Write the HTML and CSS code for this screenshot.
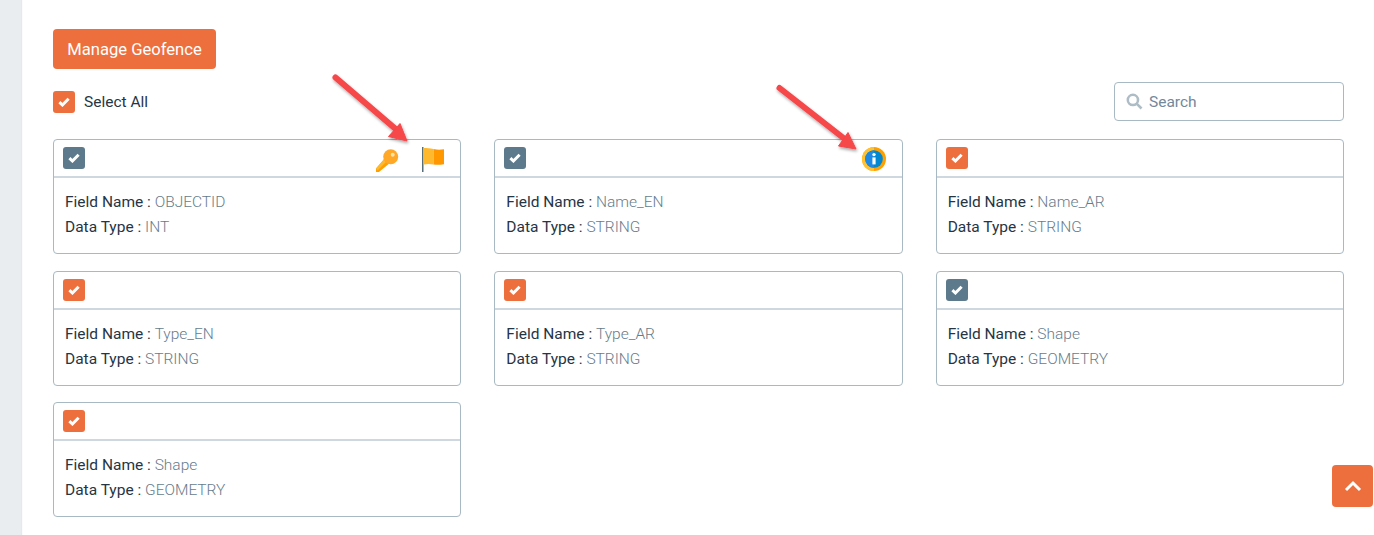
FILE: index.html
```html
<!DOCTYPE html>
<html lang="en">
<head>
<meta charset="utf-8">
<title>Manage Geofence</title>
<link rel="stylesheet" href="styles.css">
</head>
<body>
<div class="layout">
  <aside class="rail"></aside>
  <main class="main">
    <button class="btn-primary" type="button">Manage Geofence</button>
    <div class="toolbar">
      <label class="select-all">
        <span class="check check-orange"><svg viewBox="0 0 12 10" class="tick"><path d="M1.4 5.2 4.4 8 10.6 1.8"/></svg></span>
        <span>Select All</span>
      </label>
      <div class="search">
        <svg class="search-icon" viewBox="0 0 16 16"><circle cx="6.5" cy="6.5" r="4.8"/><path d="M10 10l4.6 4.6"/></svg>
        <span>Search</span>
      </div>
    </div>
    <div class="grid">
      <section class="card">
        <header class="card-head">
          <span class="check check-slate"><svg viewBox="0 0 12 10" class="tick"><path d="M1.4 5.2 4.4 8 10.6 1.8"/></svg></span>
          <span class="head-icons">
            <svg class="ic-key" viewBox="0 0 23 23"><path fill="#ffa000" d="M0 19.500 9.500 8.500l5 5L3 23H0z"/><path fill="#ffb92e" d="M0 19.500 9.500 8.500l2.500 2.500L1.500 21.500z"/><circle cx="14.700" cy="7.700" r="7.500" fill="#ffa726"/><circle cx="16.700" cy="5.700" r="2" fill="#ffe2a8"/></svg>
            <svg class="ic-flag" viewBox="0 0 23 25"><rect x="0" y="0" width="1.500" height="25" fill="#546e7a"/><path fill="#ffb92e" d="M1.500 1c4 0 6 .2 10 1v15.500C7.500 16.800 5.500 16.800 1.500 17.500z"/><path fill="#ff9800" d="M11.500 2c4 .8 6.500 .8 10.500 .2v15c-4 .5-6.500 .8-10.500 .3z"/></svg>
          </span>
        </header>
        <div class="card-body">
          <p>Field Name : <span class="val">OBJECTID</span></p>
          <p>Data Type : <span class="val">INT</span></p>
        </div>
      </section>
      <section class="card">
        <header class="card-head">
          <span class="check check-slate"><svg viewBox="0 0 12 10" class="tick"><path d="M1.4 5.2 4.4 8 10.6 1.8"/></svg></span>
          <span class="head-icons">
            <svg class="ic-info" viewBox="0 0 24 24"><circle cx="12" cy="12" r="12" fill="#ffa000"/><path fill="#ffc233" d="M12 0a12 12 0 0 0 0 24z"/><circle cx="12" cy="12" r="8.800" fill="#0288d1"/><path fill="#1e88e5" d="M12 3.200a8.800 8.800 0 0 0 0 17.600z"/><circle cx="12" cy="7.600" r="1.700" fill="#fff"/><rect x="10.400" y="10.400" width="3.200" height="7" fill="#fff"/></svg>
          </span>
        </header>
        <div class="card-body">
          <p>Field Name : <span class="val">Name_EN</span></p>
          <p>Data Type : <span class="val">STRING</span></p>
        </div>
      </section>
      <section class="card">
        <header class="card-head">
          <span class="check check-orange"><svg viewBox="0 0 12 10" class="tick"><path d="M1.4 5.2 4.4 8 10.6 1.8"/></svg></span>
        </header>
        <div class="card-body">
          <p>Field Name : <span class="val">Name_AR</span></p>
          <p>Data Type : <span class="val">STRING</span></p>
        </div>
      </section>
      <section class="card">
        <header class="card-head">
          <span class="check check-orange"><svg viewBox="0 0 12 10" class="tick"><path d="M1.4 5.2 4.4 8 10.6 1.8"/></svg></span>
        </header>
        <div class="card-body">
          <p>Field Name : <span class="val">Type_EN</span></p>
          <p>Data Type : <span class="val">STRING</span></p>
        </div>
      </section>
      <section class="card">
        <header class="card-head">
          <span class="check check-orange"><svg viewBox="0 0 12 10" class="tick"><path d="M1.4 5.2 4.4 8 10.6 1.8"/></svg></span>
        </header>
        <div class="card-body">
          <p>Field Name : <span class="val">Type_AR</span></p>
          <p>Data Type : <span class="val">STRING</span></p>
        </div>
      </section>
      <section class="card">
        <header class="card-head">
          <span class="check check-slate"><svg viewBox="0 0 12 10" class="tick"><path d="M1.4 5.2 4.4 8 10.6 1.8"/></svg></span>
        </header>
        <div class="card-body">
          <p>Field Name : <span class="val">Shape</span></p>
          <p>Data Type : <span class="val">GEOMETRY</span></p>
        </div>
      </section>
      <section class="card">
        <header class="card-head">
          <span class="check check-orange"><svg viewBox="0 0 12 10" class="tick"><path d="M1.4 5.2 4.4 8 10.6 1.8"/></svg></span>
        </header>
        <div class="card-body">
          <p>Field Name : <span class="val">Shape</span></p>
          <p>Data Type : <span class="val">GEOMETRY</span></p>
        </div>
      </section>
    </div>
  </main>
</div>
<button class="to-top" type="button" aria-label="Back to top"><svg viewBox="0 0 18 12"><path d="M2 10 9 3l7 7"/></svg></button>
<svg class="arrows" viewBox="0 0 1374 535">
  <defs><filter id="sh" x="-20%" y="-20%" width="140%" height="140%"><feDropShadow dx="1" dy="2" stdDeviation="1.500" flood-color="#000" flood-opacity=".35"/></filter></defs>
  <g filter="url(#sh)" fill="#f6464a" stroke="none">
    <path d="M335.500 77.500 398 131" stroke="#f6464a" stroke-width="6" stroke-linecap="round" fill="none"/>
    <path d="M407 141 388.500 136.500 400 123.500z" stroke="#f6464a" stroke-width="1"/>
    <path d="M779.500 88 846 140" stroke="#f6464a" stroke-width="6" stroke-linecap="round" fill="none"/>
    <path d="M856 149 838.500 146 848 132.500z" stroke="#f6464a" stroke-width="1"/>
  </g>
</svg>
</body>
</html>
```
FILE: styles.css
```css
* { box-sizing: border-box; }
html, body { margin: 0; height: 100%; overflow: hidden; }
body { background: #fff; font-family: Roboto, "Liberation Sans", sans-serif; font-size: 15.5px; color: #263544; }
.layout { display: flex; height: 535px; }
.rail { width: 21px; flex: none; background: #e9edf0; box-shadow: 1px 0 1px rgba(90,110,125,.15); }
.main { flex: 1; padding: 29px 30px 0 32px; }
.btn-primary { display: block; width: 163px; height: 40px; border: 0; border-radius: 4px; background: #ed6f3d; color: #fff; font: 400 16.6px Roboto, "Liberation Sans", sans-serif; padding: 0; }
.toolbar { display: flex; justify-content: space-between; align-items: center; margin-top: 13px; height: 39px; }
.select-all { display: flex; align-items: center; gap: 9px; }
.check { display: flex; align-items: center; justify-content: center; width: 22px; height: 22px; border-radius: 3px; flex: none; }
.check-orange { background: #ed6f3d; }
.check-slate { background: #5c7a8c; }
.tick { width: 12px; height: 10px; fill: none; stroke: #fff; stroke-width: 3; }
.search { display: flex; align-items: center; gap: 6px; width: 230px; height: 39px; border: 1px solid #a8b9c3; border-radius: 4px; padding-left: 11px; color: #73889a; }
.search-icon { width: 17px; height: 17px; fill: none; stroke: #aebcc5; stroke-width: 2.400; }
.grid { display: grid; grid-template-columns: repeat(3, 1fr); column-gap: 33px; row-gap: 16.5px; margin-top: 18px; }
.card { height: 115px; border: 1px solid #a8b9c3; border-radius: 4px; background: #fff; }
.card-head { display: flex; align-items: center; justify-content: space-between; height: 38px; border-bottom: 2px solid #ced8de; padding: 0 15px 0 9px; }
.head-icons { display: flex; align-items: center; gap: 23px; margin-top: 2px; }
.ic-key { width: 23px; height: 23px; margin-top: 2px; }
.ic-flag { width: 23px; height: 25px; }
.ic-info { width: 24px; height: 24px; margin-right: 1px; }
.card-body { padding: 12px 11px 0; }
.card-body p { margin: 0; line-height: 25px; }
.val { color: #667c8c; font-weight: 300; }
.to-top { position: fixed; left: 1332px; top: 465px; width: 41px; height: 42px; padding: 0; border: 0; border-radius: 4px; background: #ed6f3d; display: flex; align-items: center; justify-content: center; }
.to-top svg { width: 18px; height: 12px; fill: none; stroke: #fff; stroke-width: 3; }
.arrows { position: fixed; left: 0; top: 0; width: 1374px; height: 535px; pointer-events: none; }
```
